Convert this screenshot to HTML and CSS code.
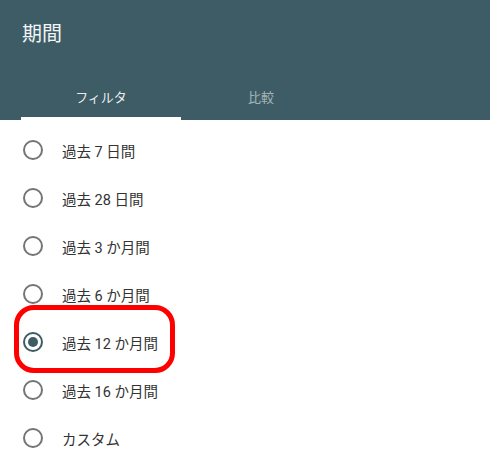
FILE: index.html
```html
<!DOCTYPE html>
<html lang="ja">
<head>
    <meta charset="UTF-8">
    <title>期間</title>
    <link rel="stylesheet" href="styles.css">
</head>
<body>
<div class="dialog">
    <div class="header">
        <div class="title">期間</div>
        <div class="tabs">
            <div class="tab active">フィルタ</div>
            <div class="tab">比較</div>
        </div>
    </div>

    <ul class="options">
        <li class="option"><span class="radio"></span><span class="label">過去 7 日間</span></li>
        <li class="option"><span class="radio"></span><span class="label">過去 28 日間</span></li>
        <li class="option"><span class="radio"></span><span class="label">過去 3 か月間</span></li>
        <li class="option"><span class="radio"></span><span class="label">過去 6 か月間</span></li>
        <li class="option selected">
            <span class="radio"></span><span class="label">過去 12 か月間</span>
            <span class="highlight"></span>
        </li>
        <li class="option"><span class="radio"></span><span class="label">過去 16 か月間</span></li>
        <li class="option"><span class="radio"></span><span class="label">カスタム</span></li>
    </ul>
</div>
</body>
</html>
```

FILE: styles.css
```css
body {
    margin: 0;
    padding: 0;
    background-color: #fff;
    font-family: Roboto, "Noto Sans CJK JP", sans-serif;
}
.dialog {
    width: 490px;
    height: 456px;
    overflow: hidden;
}
.header {
    background-color: #3e5c65;
    height: 120px;
    display: flex;
    flex-direction: column;
}
.title {
    height: 72px;
    box-sizing: border-box;
    padding: 20px 0 0 22px;
    font-size: 20px;
    line-height: 28px;
    color: #f2f5f6;
}
.tabs {
    display: flex;
    padding-left: 21px;
    height: 48px;
}
.tab {
    width: 160px;
    box-sizing: border-box;
    display: flex;
    align-items: center;
    justify-content: center;
    font-size: 13px;
    color: rgba(255,255,255,0.55);
    border-bottom: 3px solid transparent;
    padding-top: 3px;
}
.tab.active {
    color: rgba(255,255,255,0.9);
    border-bottom-color: #fff;
}
.options {
    list-style: none;
    margin: 0;
    padding: 6px 0 0 0;
}
.option {
    position: relative;
    height: 48px;
    display: flex;
    align-items: center;
    padding-left: 23px;
}
.radio {
    width: 20px;
    height: 20px;
    box-sizing: border-box;
    border: 2px solid #757575;
    border-radius: 50%;
    display: flex;
    align-items: center;
    justify-content: center;
}
.option.selected .radio {
    border-color: #3e5c65;
}
.option.selected .radio::after {
    content: "";
    width: 10px;
    height: 10px;
    border-radius: 50%;
    background-color: #3e5c65;
}
.label {
    margin-left: 19px;
    font-size: 14.5px;
    color: #333;
}
/* красная рамка вокруг выбранного пункта */
.highlight {
    position: absolute;
    left: 14px;
    top: -13px;
    width: 161px;
    height: 68px;
    box-sizing: border-box;
    border: 5px solid #f00;
    border-radius: 20px;
}
```
